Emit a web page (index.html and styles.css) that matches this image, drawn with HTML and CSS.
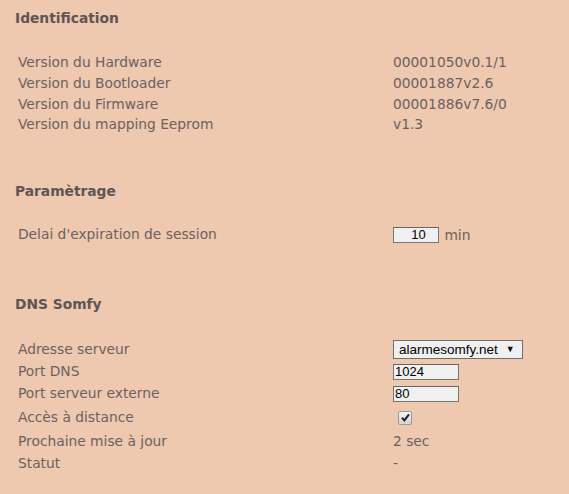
FILE: index.html
```html
<!DOCTYPE html>
<html lang="fr">
<head>
<meta charset="utf-8">
<link rel="stylesheet" href="styles.css">
</head>
<body>
<div class="page">
  <section class="sec sec-ident">
    <h2 class="title">Identification</h2>
    <div class="rows">
      <div class="row"><span class="lbl">Version du Hardware</span><span class="val">00001050v0.1/1</span></div>
      <div class="row"><span class="lbl">Version du Bootloader</span><span class="val">00001887v2.6</span></div>
      <div class="row"><span class="lbl">Version du Firmware</span><span class="val">00001886v7.6/0</span></div>
      <div class="row"><span class="lbl">Version du mapping Eeprom</span><span class="val">v1.3</span></div>
    </div>
  </section>
  <section class="sec sec-param">
    <h2 class="title">Paramètrage</h2>
    <div class="rows">
      <div class="row"><span class="lbl">Delai d'expiration de session</span><span class="val"><input class="inp inp-short" type="text" value="10"> <span class="unit">min</span></span></div>
    </div>
  </section>
  <section class="sec sec-dns">
    <h2 class="title">DNS Somfy</h2>
    <div class="rows">
      <div class="row row-sel"><span class="lbl">Adresse serveur</span><span class="val"><span class="select">alarmesomfy.net <span class="arrow">▼</span></span></span></div>
      <div class="row row-inp"><span class="lbl">Port DNS</span><span class="val"><input class="inp" type="text" value="1024"></span></div>
      <div class="row row-inp"><span class="lbl">Port serveur externe</span><span class="val"><input class="inp" type="text" value="80"></span></div>
      <div class="row row-chk"><span class="lbl">Accès à distance</span><span class="val"><span class="chk"><svg width="9" height="9" viewBox="0 0 9 9"><path d="M1 4.8 L3.4 7.4 L8 1.4" fill="none" stroke="#222" stroke-width="2"/></svg></span></span></div>
      <div class="row row-next"><span class="lbl">Prochaine mise à jour</span><span class="val">2 sec</span></div>
      <div class="row"><span class="lbl">Statut</span><span class="val">-</span></div>
    </div>
  </section>
</div>
</body>
</html>
```

FILE: styles.css
```css
html, body {
  margin: 0;
  padding: 0;
}
body {
  background: #efc8b0;
  font-family: "DejaVu Sans", Verdana, sans-serif;
  font-size: 13.8px;
  color: #6b6260;
  width: 569px;
  height: 494px;
  overflow: hidden;
}
.page {
  padding: 8px 0 0 15px;
}
.title {
  margin: 0;
  font-size: 13.8px;
  font-weight: bold;
  color: #5e5554;
  height: 20px;
  line-height: 20px;
}
.rows {
  padding-left: 3px;
}
.sec-ident .rows { margin-top: 24px; }
.sec-param { margin-top: 46px; }
.sec-param .rows { margin-top: 23px; }
.sec-dns { margin-top: 50px; }
.sec-dns .rows { margin-top: 24px; }
.row {
  display: grid;
  grid-template-columns: 375px auto;
  height: 20.7px;
  align-items: center;
  white-space: nowrap;
}
.row-sel { height: 22px; }
.row-inp { height: 22px; }
.row-chk { height: 26px; }
.row-next { height: 22px; }
.inp {
  box-sizing: border-box;
  width: 66px;
  height: 16px;
  border: 1px solid #767676;
  border-top-color: #666;
  background: #f0f0f0;
  font-family: "Liberation Sans", Arial, sans-serif;
  font-size: 13px;
  color: #000;
  padding: 0 1px;
  margin: 0;
  vertical-align: middle;
}
.inp-short {
  width: 46px;
  text-align: center;
  padding-left: 6px;
}
.unit {
  margin-left: 1px;
  vertical-align: middle;
}
.select {
  box-sizing: border-box;
  display: inline-flex;
  align-items: center;
  width: 130px;
  height: 19px;
  border: 1px solid #707070;
  background: #f0f0f0;
  font-family: "Liberation Sans", Arial, sans-serif;
  font-size: 13.5px;
  color: #000;
  padding-left: 5px;
}
.arrow {
  font-size: 9px;
  margin-left: 8px;
}
.chk {
  box-sizing: border-box;
  display: inline-flex;
  align-items: center;
  justify-content: center;
  width: 14px;
  height: 14px;
  margin-left: 5px;
  border: 1px solid #9a9a9a;
  border-radius: 2px;
  background: linear-gradient(#f4f4f4, #d4d4d4);
}
```
